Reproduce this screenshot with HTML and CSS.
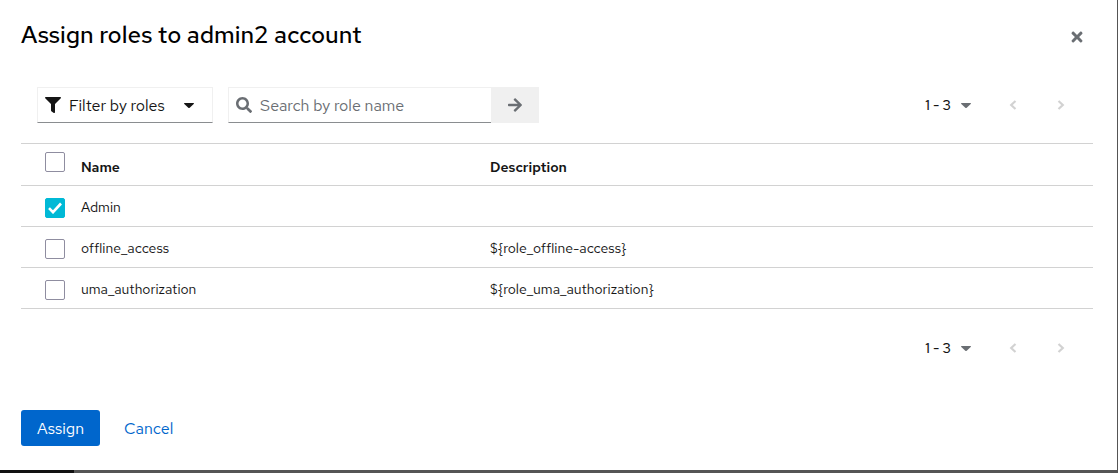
FILE: index.html
```
<!DOCTYPE html>
<html lang="en">
<head>
<meta charset="utf-8">
<title>Assign roles</title>
<link rel="stylesheet" href="styles.css">
</head>
<body class="backdrop">
<main class="modal" role="dialog" aria-labelledby="modal-title">
  <header class="modal-header">
    <h1 class="modal-title" id="modal-title">Assign roles to admin2 account</h1>
    <button class="icon-button close" type="button" aria-label="Close">
      <svg width="12" height="16" viewBox="0 0 352 512" fill="currentColor"><path d="M243 256l100-100c12-12 12-32 0-44l-22-22c-12-12-32-12-44 0L176 190 76 90c-12-12-32-12-44 0L9 112c-12 12-12 32 0 44l100 100L9 356c-12 12-12 32 0 44l22 22c12 12 32 12 44 0l101-100 100 100c12 12 32 12 44 0l23-22c12-12 12-32 0-44z"/></svg>
    </button>
  </header>

  <div class="toolbar">
    <button class="filter" type="button">
      <svg width="16" height="16" viewBox="0 0 512 512" fill="currentColor"><path d="M488 0H24C3 0-8 26 7 41l185 185v206c0 8 4 15 10 20l80 56c16 11 38 0 38-20V226L505 41c15-15 4-41-17-41z"/></svg>
      <span class="filter-label">Filter by roles</span>
      <svg width="10" height="5" viewBox="0 0 10 5" fill="currentColor"><path d="M.6 0h8.800q1 0 .3.900L5.700 4.700q-.7.600-1.400 0L.3.900Q-.4 0 .6 0z"/></svg>
    </button>
    <form class="search">
      <label class="search-box">
        <svg class="search-icon" width="16" height="16" viewBox="0 0 512 512" fill="currentColor"><path d="M505 443L405 343c-4-4-11-7-17-7h-16c27-35 44-80 44-128C416 93 323 0 208 0S0 93 0 208s93 208 208 208c48 0 93-17 128-44v16c0 6 3 12 7 17l100 100c9 9 24 9 34 0l28-28c9-10 9-25 0-34zM208 336c-71 0-128-57-128-128S137 80 208 80s128 57 128 128-57 128-128 128z"/></svg>
        <input class="search-input" type="text" placeholder="Search by role name" aria-label="Search by role name">
      </label>
      <button class="search-submit" type="button" aria-label="Search">
        <svg width="14" height="16" viewBox="0 0 448 512" fill="currentColor"><path d="M190 101l23-22c9-10 24-10 34 0l194 194c9 9 9 24 0 34L247 501c-10 9-25 9-34 0l-23-22c-9-10-9-25 1-35l120-114H24c-13 0-24-11-24-24v-32c0-13 11-24 24-24h287L191 136c-10-10-10-25-1-35z" transform="translate(0 -34)"/></svg>
      </button>
    </form>
    <nav class="pager" aria-label="Top pagination">
      <button class="pager-range" type="button">1 - 3
        <svg width="10" height="5" viewBox="0 0 10 5" fill="currentColor"><path d="M.6 0h8.800q1 0 .3.900L5.700 4.700q-.7.600-1.400 0L.3.900Q-.4 0 .6 0z"/></svg>
      </button>
      <button class="icon-button step" type="button" disabled aria-label="Previous page"><svg width="8" height="10" viewBox="0 0 8 10" fill="none" stroke="currentColor" stroke-width="2.200"><path d="M6.500 1L2.200 5l4.300 4"/></svg></button>
      <button class="icon-button step" type="button" disabled aria-label="Next page"><svg width="8" height="10" viewBox="0 0 8 10" fill="none" stroke="currentColor" stroke-width="2.200"><path d="M1.500 1l4.300 4-4.300 4"/></svg></button>
    </nav>
  </div>

  <table class="roles">
    <colgroup><col class="col-check"><col class="col-name"><col></colgroup>
    <thead>
      <tr><th class="check"><input class="checkbox" type="checkbox" aria-label="Select all roles"></th><th scope="col">Name</th><th scope="col">Description</th></tr>
    </thead>
    <tbody>
      <tr><td class="check"><input class="checkbox" type="checkbox" id="admin" checked></td><td><label for="admin">Admin</label></td><td></td></tr>
      <tr><td class="check"><input class="checkbox" type="checkbox" id="offline"></td><td><label for="offline">offline_access</label></td><td>${role_offline-access}</td></tr>
      <tr><td class="check"><input class="checkbox" type="checkbox" id="uma"></td><td><label for="uma">uma_authorization</label></td><td>${role_uma_authorization}</td></tr>
    </tbody>
  </table>

  <div class="toolbar toolbar-bottom">
    <nav class="pager" aria-label="Bottom pagination">
      <button class="pager-range" type="button">1 - 3
        <svg width="10" height="5" viewBox="0 0 10 5" fill="currentColor"><path d="M.6 0h8.800q1 0 .3.900L5.700 4.700q-.7.600-1.400 0L.3.900Q-.4 0 .6 0z"/></svg>
      </button>
      <button class="icon-button step" type="button" disabled aria-label="Previous page"><svg width="8" height="10" viewBox="0 0 8 10" fill="none" stroke="currentColor" stroke-width="2.200"><path d="M6.500 1L2.200 5l4.300 4"/></svg></button>
      <button class="icon-button step" type="button" disabled aria-label="Next page"><svg width="8" height="10" viewBox="0 0 8 10" fill="none" stroke="currentColor" stroke-width="2.200"><path d="M1.500 1l4.300 4-4.300 4"/></svg></button>
    </nav>
  </div>

  <footer class="actions">
    <button class="button primary" type="button">Assign</button>
    <button class="button link" type="button">Cancel</button>
  </footer>
</main>
</body>
</html>
```

FILE: styles.css
```
* {
  box-sizing: border-box;
}

svg {
  display: block;
  flex: none;
}

button,
input {
  font: inherit;
  color: inherit;
}

button {
  border: 0;
  padding: 0;
  background: none;
}

.backdrop {
  margin: 0;
  padding: 0 1px 3px 0;
  min-height: 100vh;
  display: flex;
  background: linear-gradient(to right, #111 74px, #555 74px);
  color: #151515;
  font-family: "Red Hat Text", "Open Sans", "Noto Sans", sans-serif;
  font-size: 16px;
  line-height: 24px;
}

.modal {
  flex: 1;
  padding: 16px 24px 24px 21px;
  background: #fff;
}

.modal-header {
  display: flex;
  justify-content: space-between;
  align-items: flex-start;
  height: 40px;
}

.modal-title {
  margin: 0;
  color: #000;
  font-size: 24px;
  line-height: 38px;
  font-weight: 500;
}

.icon-button {
  display: flex;
  align-items: center;
  justify-content: center;
  color: #6a6e73;
}

.close {
  width: 32px;
  height: 42px;
}

.toolbar {
  display: flex;
  align-items: center;
  gap: 15px;
  padding: 31px 16px 20px;
}

.toolbar-bottom {
  padding: 21px 16px 44px;
}

.filter {
  display: flex;
  align-items: center;
  width: 176px;
  height: 36px;
  padding: 0 18px 0 7px;
  border: 1px solid #f0f0f0;
  border-bottom-color: #8a8d90;
}

.filter-label {
  flex: 1;
  margin-left: 8px;
  padding-top: 2px;
  text-align: left;
}

.search {
  display: flex;
  height: 36px;
}

.search-box {
  display: flex;
  align-items: center;
  gap: 8px;
  width: 263px;
  padding: 0 7px;
  border: 1px solid #f0f0f0;
  border-right: 0;
  border-bottom-color: #8a8d90;
  color: #6a6e73;
}

.search-input {
  flex: 1;
  min-width: 0;
  padding: 2px 0 0;
  border: 0;
  outline: 0;
  background: none;
}

.search-input::placeholder {
  color: #6a6e73;
  opacity: 1;
}

.search-submit {
  display: flex;
  align-items: center;
  justify-content: center;
  width: 48px;
  background: #f0f0f0;
  color: #6a6e73;
}

.pager {
  display: flex;
  align-items: center;
  height: 36px;
  margin-left: auto;
}

.pager-range {
  display: flex;
  align-items: center;
  gap: 10px;
  margin-right: 18px;
  font-size: 14px;
  font-weight: 500;
}

.pager-range svg {
  color: #6a6e73;
}

.step {
  width: 48px;
  height: 36px;
  color: #d2d2d2;
}

.pager .step:last-child {
  margin-right: -8px;
}

.roles {
  width: 100%;
  table-layout: fixed;
  border-collapse: collapse;
  border-top: 1px solid #d2d2d2;
  font-size: 14px;
  line-height: 20px;
}

.col-check {
  width: 60px;
}

.col-name {
  width: 38.15%;
}

.roles tr {
  border-bottom: 1px solid #d2d2d2;
}

.roles th,
.roles td {
  height: 41px;
  padding: 11px 0 9px;
  text-align: left;
  vertical-align: middle;
}

.roles th {
  height: 42px;
  padding: 13px 0 8px;
  font-weight: 600;
}

.roles .check {
  padding: 11px 0 8px 24px;
}

.roles th.check {
  padding: 8px 0 13px 24px;
}

.checkbox {
  appearance: none;
  display: block;
  width: 20px;
  height: 20px;
  margin: 0;
  border: 1px solid #8f8da0;
  border-radius: 2px;
  background: #fff;
}

.checkbox:checked {
  border-color: #00b9d6;
  background: #00b9d6 url("data:image/svg+xml,%3Csvg xmlns='http://www.w3.org/2000/svg' viewBox='0 0 14 12'%3E%3Cpath d='M1 6.200l4 4L13 1.500' fill='none' stroke='white' stroke-width='2.600'/%3E%3C/svg%3E") center / 14px 12px no-repeat;
}

.actions {
  display: flex;
  gap: 8px;
}

.button {
  height: 36px;
  padding: 2px 16px 0;
  border-radius: 3px;
}

.primary {
  background: #06c;
  color: #fff;
}

.link {
  color: #06c;
}
```
